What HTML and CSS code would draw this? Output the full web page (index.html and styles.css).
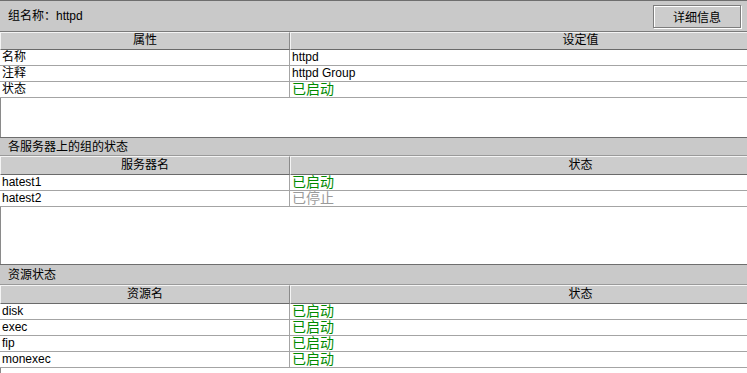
FILE: index.html
```html
<!DOCTYPE html>
<html lang="zh-CN">
<head>
<meta charset="utf-8">
<title>组</title>
<link rel="stylesheet" href="styles.css">
</head>
<body>
<div class="page">
  <div class="bar bar-main">
    <span class="bar-title">组名称：httpd</span>
    <button class="btn">详细信息</button>
  </div>
  <div class="table">
    <div class="thead"><div class="th c1">属性</div><div class="th c2">设定值</div></div>
    <div class="row"><div class="td c1">名称</div><div class="td c2">httpd</div></div>
    <div class="row"><div class="td c1">注释</div><div class="td c2">httpd Group</div></div>
    <div class="row"><div class="td c1">状态</div><div class="td c2 on">已启动</div></div>
  </div>
  <div class="filler f1"></div>

  <div class="bar bar-sec s2"><span class="bar-title">各服务器上的组的状态</span></div>
  <div class="table">
    <div class="thead tall"><div class="th c1">服务器名</div><div class="th c2">状态</div></div>
    <div class="row"><div class="td c1">hatest1</div><div class="td c2 on">已启动</div></div>
    <div class="row"><div class="td c1">hatest2</div><div class="td c2 off">已停止</div></div>
  </div>
  <div class="filler f2"></div>

  <div class="bar bar-sec s3"><span class="bar-title">资源状态</span></div>
  <div class="table">
    <div class="thead tall"><div class="th c1">资源名</div><div class="th c2">状态</div></div>
    <div class="row"><div class="td c1">disk</div><div class="td c2 on">已启动</div></div>
    <div class="row"><div class="td c1">exec</div><div class="td c2 on">已启动</div></div>
    <div class="row"><div class="td c1">fip</div><div class="td c2 on">已启动</div></div>
    <div class="row"><div class="td c1">monexec</div><div class="td c2 on">已启动</div></div>
  </div>
  <div class="filler f3"></div>
</div>
</body>
</html>
```

FILE: styles.css
```css
html, body {
  margin: 0;
  padding: 0;
  background: #ffffff;
  overflow: hidden;
}
body {
  font-family: "Liberation Sans", "Noto Sans CJK SC", sans-serif;
  font-size: 12px;
  color: #000;
  width: 747px;
  height: 373px;
}
.page {
  display: flex;
  flex-direction: column;
  width: 747px;
}
.bar {
  box-sizing: border-box;
  background: #c9c9c9;
  border-top: 1px solid #6e6e6e;
  border-bottom: 1px solid #9a9a9a;
  display: flex;
  align-items: center;
  justify-content: space-between;
  padding-left: 8px;
  padding-right: 6px;
}
.bar-main {
  height: 32px;
  border-bottom-color: #7a7a7a;
}
.bar-title {
  line-height: 14px;
}
.s2 { height: 19px; padding-left: 8px; }
.s3 { height: 21px; padding-left: 8px; }
.btn {
  font-family: "Liberation Sans", "Noto Sans CJK SC", sans-serif;
  font-size: 12px;
  width: 88px;
  height: 23px;
  margin: 0;
  padding: 0;
  background: #cccccc;
  border: 1px solid #7d7d7d;
  box-shadow: inset 1px 1px 0 #ffffff, 1px 1px 0 #ffffff;
  color: #000;
}
.table {
  display: grid;
  grid-template-columns: 290px 457px;
  width: 747px;
}
.thead, .row {
  display: contents;
}
.th {
  box-sizing: border-box;
  height: 18px;
  background: #cccccc;
  border-top: 1px solid #f4f4f4;
  border-left: 1px solid #f4f4f4;
  border-right: 1px solid #8a8a8a;
  border-bottom: 1px solid #6a6a6a;
  text-align: center;
  line-height: 15px;
}
.th.c2 {
  border-right: none;
  padding-left: 123px;
}
.tall .th { height: 19px; line-height: 16px; }
.td {
  box-sizing: border-box;
  height: 16px;
  border-bottom: 1px solid #a4a4a4;
  line-height: 15px;
  padding-left: 2px;
  white-space: nowrap;
}
.td.c1 {
  border-right: 1px solid #a4a4a4;
}
.td.c2 {
  padding-left: 2px;
}
.on {
  color: #008a00;
  font-size: 14px;
}
.off {
  color: #9a9a9a;
  font-size: 14px;
}
.filler {
  box-sizing: border-box;
  border-left: 1px solid #8a8a8a;
  background: #fff;
}
.f1 { height: 39px; }
.f2 { height: 57px; }
.f3 { height: 6px; }
```
